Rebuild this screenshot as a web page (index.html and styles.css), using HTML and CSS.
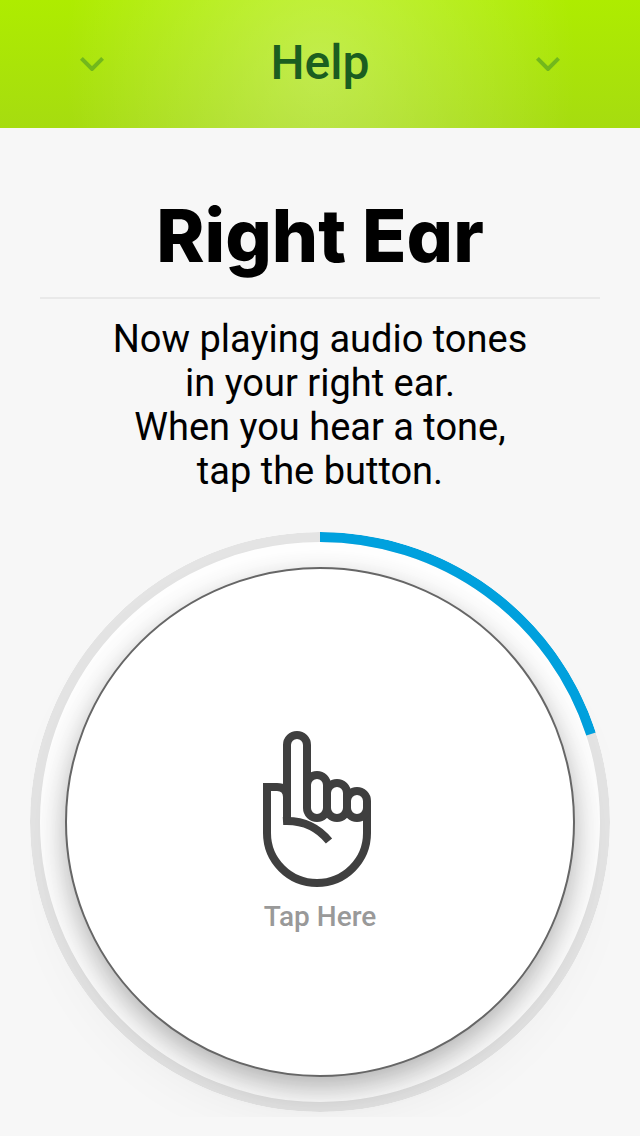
FILE: index.html
```html
<!DOCTYPE html>
<html lang="en">
<head>
  <meta charset="UTF-8">
  <meta name="viewport" content="width=device-width, initial-scale=1">
  <title>Right Ear</title>
  <link rel="stylesheet" href="styles.css">
</head>
<body>
  <header>
    <button type="button" class="help">
      <svg class="chevron" viewBox="0 0 24 18" aria-hidden="true"><path d="M1.4 5.4 L12 16 L22.6 5.4"/></svg>
      <span>Help</span>
      <svg class="chevron" viewBox="0 0 24 18" aria-hidden="true"><path d="M1.4 5.4 L12 16 L22.6 5.4"/></svg>
    </button>
  </header>

  <main>
    <h1>Right Ear</h1>
    <p class="instructions">
      Now playing audio tones<br>
      in your right ear.<br>
      When you hear a tone,<br>
      tap the button.
    </p>

    <div class="dial">
      <!-- progress ring, pathLength makes the dash a percentage -->
      <svg class="ring" viewBox="0 0 580 580" aria-hidden="true">
        <circle class="track" cx="290" cy="290" r="285"/>
        <circle class="progress" cx="290" cy="290" r="285" pathLength="100" stroke-dasharray="20 100" transform="rotate(-90 290 290)"/>
      </svg>
      <button type="button" class="tap">
        <svg class="hand" viewBox="0 0 114 156" aria-hidden="true">
          <path d="M0 56 H14 C20 56 24 59 24 66"/>
          <path d="M4 52 V102 A50 50 0 0 0 104 102 V76"/>
          <path d="M24 90 V14 A10 10 0 0 1 44 14 V77"/>
          <rect x="44" y="44" width="20" height="43" rx="10"/>
          <rect x="64" y="52" width="20" height="35" rx="10"/>
          <rect x="84" y="60" width="20" height="27" rx="10"/>
          <path d="M20 90 C38 89 54 95 66 110"/>
        </svg>
        <span>Tap Here</span>
      </button>
    </div>
  </main>
</body>
</html>
```
FILE: styles.css
```css
* {
  box-sizing: border-box;
}

body {
  margin: 0;
  background-color: #f7f7f7;
  color: #000;
  font-family: Roboto, sans-serif;
}

button {
  font-family: inherit;
  cursor: pointer;
}

header {
  background:
    radial-gradient(ellipse 40% 240% at 50% 50%, rgba(255, 255, 255, 0.28), rgba(255, 255, 255, 0)),
    linear-gradient(#aeec00, #a6dc10);
}

.help {
  display: flex;
  justify-content: space-between;
  align-items: center;
  width: 100%;
  height: 128px;
  padding: 0 80px 4px;
  border: none;
  background: none;
  color: #1b5e20;
  font-size: 48px;
  font-weight: 500;
}

.chevron {
  width: 24px;
  height: 18px;
  fill: none;
  stroke: #72b81c;
  stroke-width: 4;
}

main {
  padding: 64px 30px 0;
}

h1 {
  margin: 0 10px;
  padding-bottom: 17px;
  border-bottom: 2px solid #e9e9e9;
  font-family: Inter, sans-serif;
  font-size: 73px;
  font-weight: 800;
  font-feature-settings: "cv11";
  line-height: 88px;
  text-align: center;
}

.instructions {
  margin: 18px 0 39px;
  font-size: 38px;
  line-height: 44px;
  text-align: center;
}

.dial {
  display: grid;
  padding-bottom: 5px;
  overflow: hidden;
}

.ring,
.tap {
  grid-area: 1 / 1;
}

.ring {
  width: 100%;
  border-radius: 50%;
  background-color: #fff;
  fill: none;
  stroke-width: 10;
}

.track {
  stroke: #e4e4e4;
}

.progress {
  stroke: #00a1de;
}

.tap {
  display: flex;
  flex-direction: column;
  align-items: center;
  justify-content: center;
  gap: 12px;
  margin: 35px;
  padding: 22px 0 0;
  border: 2px solid #666;
  border-radius: 50%;
  background-color: #fff;
  box-shadow: 0 10px 26px rgba(0, 0, 0, 0.25), 0 24px 64px rgba(0, 0, 0, 0.08);
  color: #999;
  font-size: 28px;
  font-weight: 500;
  line-height: 36px;
}

.hand {
  width: 114px;
  height: 156px;
  fill: none;
  stroke: #3f3f3f;
  stroke-width: 8;
}
```
